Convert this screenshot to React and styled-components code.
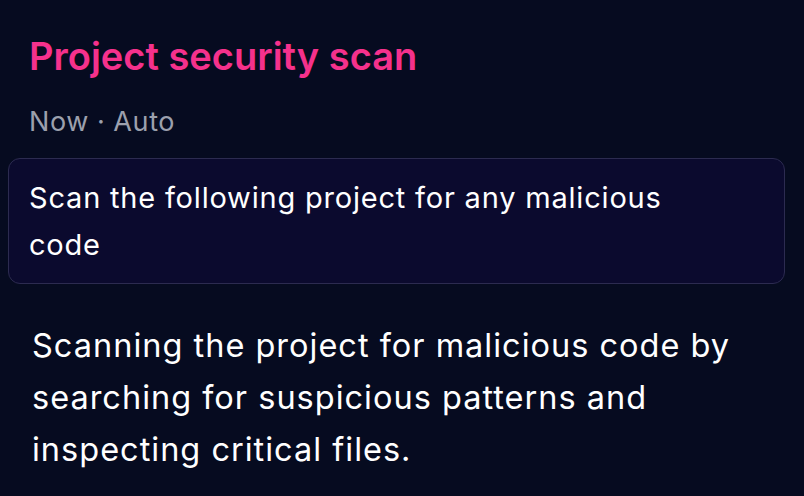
import React from 'react';
import styled, { createGlobalStyle } from 'styled-components';

const GlobalStyle = createGlobalStyle`
    html, body {
        margin: 0;
        padding: 0;
        background: #060b20;
        font-family: Inter, "Noto Sans", sans-serif;
        -webkit-font-smoothing: antialiased;
    }
`;

const Page = styled.div`
    width: 804px;
    height: 496px;
    box-sizing: border-box;
    padding: 33px 19px 0 8px;
    background: #060b20;
    overflow: hidden;
`;

const Title = styled.h1`
    margin: 0 0 0 21px;
    font-size: 38px;
    line-height: 46px;
    font-weight: 600;
    color: #f5318c;
`;

const Meta = styled.div`
    margin: 27px 0 0 21px;
    font-size: 27px;
    line-height: 32px;
    letter-spacing: 0.6px;
    color: #9ca0ad;
`;

const Dot = styled.span`
    margin: 0 8px;
`;

const PromptBox = styled.div`
    margin-top: 20px;
    padding: 15px 20px 15px;
    background: #0b0a2e;
    border: 1px solid #2c2b50;
    border-radius: 12px;
    font-size: 29px;
    line-height: 47px;
    letter-spacing: 0.8px;
    color: #ffffff;
`;

const Reply = styled.p`
    margin: 36px 0 0 24px;
    font-size: 32.5px;
    line-height: 52px;
    letter-spacing: 1px;
    color: #ffffff;
    max-width: 740px;
`;

const App = () => {
    return (
        <Page>
            <GlobalStyle />
            <Title>Project security scan</Title>
            <Meta>Now<Dot>·</Dot>Auto</Meta>
            <PromptBox>
                Scan the following project for any malicious
                <br />
                code
            </PromptBox>
            <Reply>
                Scanning the project for malicious code by searching for suspicious patterns and inspecting critical files.
            </Reply>
        </Page>
    );
};

export default App;
